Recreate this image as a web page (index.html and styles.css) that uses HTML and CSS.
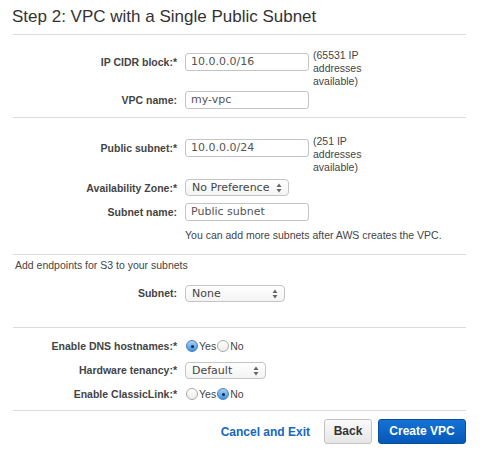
FILE: index.html
```html
<!DOCTYPE html>
<html lang="en">
<head>
<meta charset="utf-8">
<title>Step 2: VPC with a Single Public Subnet</title>
<link rel="stylesheet" href="styles.css">
</head>
<body>
<div class="page">
  <h1 class="title">Step 2: VPC with a Single Public Subnet</h1>

  <section class="sec sec-vpc">
    <div class="row">
      <span class="lbl">IP CIDR block:*</span>
      <span class="field">10.0.0.0/16</span>
      <span class="note">(65531 IP<br>addresses<br>available)</span>
    </div>
    <div class="row row-next">
      <span class="lbl">VPC name:</span>
      <span class="field">my-vpc</span>
    </div>
  </section>

  <section class="sec sec-subnet">
    <div class="row">
      <span class="lbl">Public subnet:*</span>
      <span class="field">10.0.0.0/24</span>
      <span class="note">(251 IP<br>addresses<br>available)</span>
    </div>
    <div class="row row-az">
      <span class="lbl">Availability Zone:*</span>
      <span class="select sel-az">No Preference<svg class="arr" viewBox="0 0 6 10" width="6" height="10"><path d="M3 0.5 L5.5 4 H0.5 Z M3 9.5 L5.5 6 H0.5 Z" fill="#666"/></svg></span>
    </div>
    <div class="row row-sn">
      <span class="lbl">Subnet name:</span>
      <span class="field">Public subnet</span>
    </div>
    <p class="help">You can add more subnets after AWS creates the VPC.</p>
  </section>

  <section class="sec sec-endpoints">
    <p class="intro">Add endpoints for S3 to your subnets</p>
    <div class="row row-s3">
      <span class="lbl">Subnet:</span>
      <span class="select sel-s3">None<svg class="arr" viewBox="0 0 6 10" width="6" height="10"><path d="M3 0.5 L5.5 4 H0.5 Z M3 9.5 L5.5 6 H0.5 Z" fill="#666"/></svg></span>
    </div>
  </section>

  <section class="sec sec-opts">
    <div class="row row-radio">
      <span class="lbl">Enable DNS hostnames:*</span>
      <span class="radios"><span class="radio on"></span><span class="rtxt">Yes</span><span class="radio"></span><span class="rtxt">No</span></span>
    </div>
    <div class="row row-hw">
      <span class="lbl">Hardware tenancy:*</span>
      <span class="select sel-hw">Default<svg class="arr" viewBox="0 0 6 10" width="6" height="10"><path d="M3 0.5 L5.5 4 H0.5 Z M3 9.5 L5.5 6 H0.5 Z" fill="#666"/></svg></span>
    </div>
    <div class="row row-cl">
      <span class="lbl">Enable ClassicLink:*</span>
      <span class="radios"><span class="radio"></span><span class="rtxt">Yes</span><span class="radio on"></span><span class="rtxt">No</span></span>
    </div>
  </section>

  <div class="footer">
    <a class="link" href="#">Cancel and Exit</a>
    <button class="btn btn-back">Back</button>
    <button class="btn btn-primary">Create VPC</button>
  </div>
</div>
</body>
</html>
```

FILE: styles.css
```css
* { box-sizing: border-box; }

body {
  margin: 0;
  background: #fff;
  font-family: "Liberation Sans", Arial, Helvetica, sans-serif;
  color: #444;
}

.page {
  width: 466px;
  padding-left: 13px;
}

.title {
  margin: 0;
  padding: 7px 0 7px 0;
  font-size: 17px;
  line-height: 20px;
  font-weight: normal;
  color: #333;
  border-bottom: 1px solid #dcdcdc;
  text-indent: -1px;
}

.sec {
  border-bottom: 1px solid #dcdcdc;
}

.sec-vpc { padding: 14px 0 8px; }
.sec-subnet { padding: 17px 0 12px; }
.sec-endpoints { padding: 4px 0 25px; }
.sec-opts { padding: 10px 0 8px; }

.row {
  display: flex;
  align-items: flex-start;
}

.lbl {
  width: 164px;
  flex: none;
  margin-right: 8px;
  margin-top: 4px;
  text-align: right;
  font-weight: bold;
  font-size: 10.5px;
  line-height: 18px;
  color: #444;
}

.field {
  flex: none;
  width: 124px;
  height: 18px;
  margin-top: 4px;
  padding: 0 5px;
  border: 1px solid #c4c4c4;
  border-radius: 3px;
  background: #fff;
  font-family: "DejaVu Sans", Verdana, sans-serif;
  font-size: 11px;
  line-height: 16px;
  color: #555;
  white-space: nowrap;
}

.note {
  margin-left: 4px;
  font-size: 10.5px;
  line-height: 13px;
  color: #444;
}

.row-next { margin-top: 3px; }
.row-az { margin-top: 5px; }
.row-sn { margin-top: 6px; }

.row-az .lbl, .row-sn .lbl, .row-next .lbl,
.row-s3 .lbl, .row-radio .lbl, .row-hw .lbl, .row-cl .lbl { margin-top: 0; }
.row-az .select, .row-sn .field, .row-next .field,
.row-s3 .select, .row-hw .select { margin-top: 0; }

.select {
  flex: none;
  display: flex;
  align-items: center;
  justify-content: space-between;
  height: 17px;
  margin-top: 0.5px;
  padding: 0 6px 0 6px;
  border: 1px solid #c4c4c4;
  border-radius: 4px;
  background: linear-gradient(#ffffff, #f3f3f3);
  font-family: "DejaVu Sans", Verdana, sans-serif;
  font-size: 11px;
  color: #444;
  white-space: nowrap;
}

.sel-az { width: 104px; }
.sel-s3 { width: 100px; }
.sel-hw { width: 81px; }

.arr { flex: none; }

.help {
  margin: 8px 0 0 172px;
  font-size: 10.5px;
  line-height: 13px;
  color: #444;
}

.intro {
  margin: 0 0 0 2px;
  font-size: 10.5px;
  line-height: 13px;
  color: #444;
}

.row-s3 { margin-top: 13px; }
.row-s3 .lbl { line-height: 17px; }

.row-radio .lbl, .row-cl .lbl { line-height: 16px; }
.row-hw { margin-top: 8px; }
.row-hw .lbl { line-height: 17px; }
.row-cl { margin-top: 7px; }

.radios {
  display: flex;
  align-items: center;
  height: 16px;
  margin-left: 1px;
}

.radio {
  width: 12px;
  height: 12px;
  border-radius: 50%;
  border: 1px solid #a9a9a9;
  background: linear-gradient(#ffffff, #ececec);
  position: relative;
  flex: none;
}

.radio.on {
  border-color: #4a7fc1;
  background: linear-gradient(#a9d0f5, #3d93e6);
}

.radio.on::after {
  content: "";
  position: absolute;
  left: 3.5px;
  top: 3.5px;
  width: 3px;
  height: 3px;
  border-radius: 50%;
  background: #1c2633;
}

.rtxt {
  font-size: 10.5px;
  line-height: 16px;
  color: #444;
  margin: 0 1px 0 1px;
}

.footer {
  display: flex;
  justify-content: flex-end;
  align-items: center;
  width: 453px;
  padding-top: 8px;
}

.link {
  font-weight: bold;
  font-size: 12px;
  color: #1567bf;
  text-decoration: none;
  margin-right: 14px;
}

.btn {
  height: 25px;
  padding: 0 11px;
  border-radius: 3px;
  font-family: "Liberation Sans", Arial, sans-serif;
  font-weight: bold;
  font-size: 12px;
  line-height: 23px;
}

.btn-back {
  width: 48px;
  padding: 0;
  border: 1px solid #c2c2c2;
  background: linear-gradient(#fafafa, #e6e6e6);
  color: #333;
  margin-right: 6px;
}

.btn-primary {
  width: 88px;
  padding: 0;
  border: 1px solid #0a4f9c;
  background: linear-gradient(#1472d6, #0558b8);
  color: #fff;
}
```
